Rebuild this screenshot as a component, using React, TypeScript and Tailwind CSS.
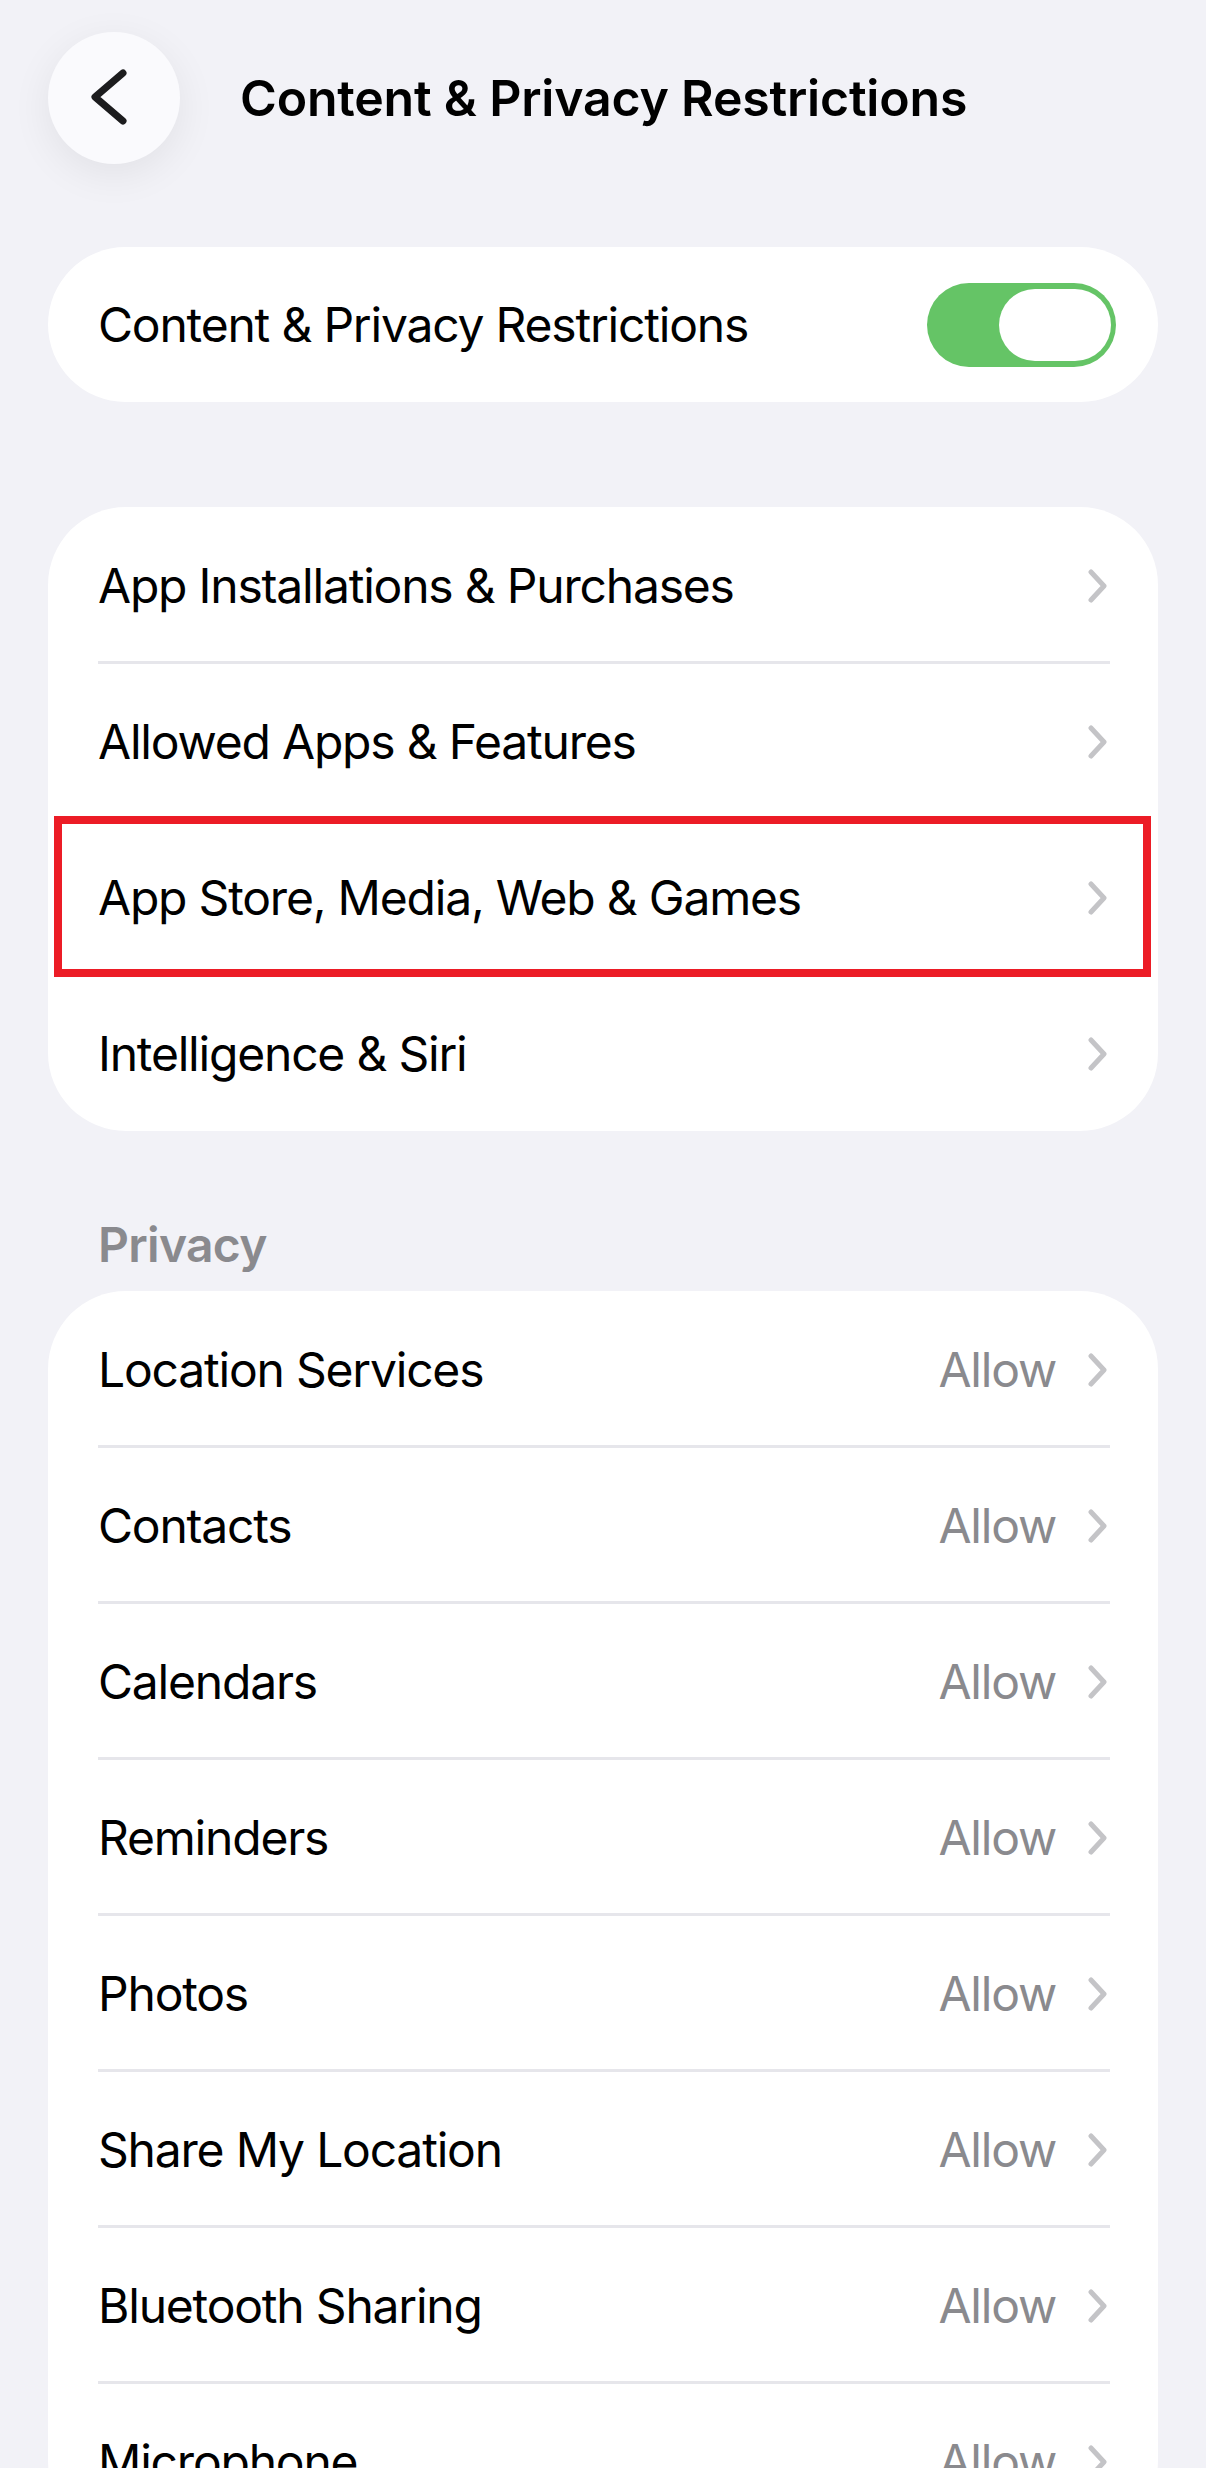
import React from "react";

const font = { fontFamily: 'Inter, "Noto Sans", sans-serif' };

function Chevron() {
  return (
    <svg width="22" height="34" viewBox="0 0 22 34" className="shrink-0">
      <path d="M4 3 L17 17 L4 31" fill="none" stroke="#c4c4c7" strokeWidth="5" strokeLinecap="round" strokeLinejoin="round" />
    </svg>
  );
}

function Row({ label, value, last, highlight }: { label: string; value?: string; last?: boolean; highlight?: boolean }) {
  return (
    <div className="relative flex h-[156px] items-center pl-[50px] pr-[49px] pt-[2px]">
      <span className="flex-1 text-[48px] tracking-[-0.025em] text-black">{label}</span>
      {value && <span className="mr-[31px] text-[48px] tracking-[-0.025em] text-[#8a8a8e]">{value}</span>}
      <Chevron />
      {!last && <div className="absolute bottom-[-1px] left-[50px] right-[48px] h-[3px] bg-[#e6e6eb]" />}
      {highlight && (
        <div className="pointer-events-none absolute left-[6px] right-[7px] top-[-3px] h-[161px] border-[8px] border-[#ec1c26]" />
      )}
    </div>
  );
}

export default function App() {
  const first = [
    "App Installations & Purchases",
    "Allowed Apps & Features",
    "App Store, Media, Web & Games",
    "Intelligence & Siri",
  ];
  const privacy = [
    "Location Services",
    "Contacts",
    "Calendars",
    "Reminders",
    "Photos",
    "Share My Location",
    "Bluetooth Sharing",
    "Microphone",
  ];
  return (
    <div className="min-h-[2468px] w-full bg-[#f2f2f7] pb-[60px]" style={font}>
      <div className="flex h-[247px] items-start pl-[48px]">
        <div className="mt-[32px] flex h-[132px] w-[132px] items-center justify-center rounded-full bg-[#fafafd] shadow-[0_10px_40px_rgba(0,0,0,0.07)]">
          <svg width="132" height="132" viewBox="0 0 132 132">
            <path d="M75 41 L47 65 L75 89" fill="none" stroke="#1c1c1e" strokeWidth="7" strokeLinecap="round" strokeLinejoin="round" />
          </svg>
        </div>
        <div className="ml-[60px] mt-[66px] text-[50px] font-semibold leading-[64px] tracking-[-0.004em] text-black">
          Content &amp; Privacy Restrictions
        </div>
      </div>

      <div className="mx-[48px] flex h-[155px] items-center rounded-[78px] bg-white pl-[50px] pr-[42px]">
        <span className="flex-1 text-[48px] tracking-[-0.025em] text-black">Content &amp; Privacy Restrictions</span>
        <div className="flex h-[84px] w-[189px] items-center justify-end rounded-full bg-[#65c466] pr-[5px]">
          <div className="h-[72px] w-[112px] rounded-full bg-white" />
        </div>
      </div>

      <div className="mx-[48px] mt-[105px] rounded-[78px] bg-white">
        {first.map((l, i) => (
          <Row key={l} label={l} last={i === first.length - 1} highlight={i === 2} />
        ))}
      </div>

      <div className="flex h-[160px] items-end pb-[17px] pl-[98px] text-[48px] font-semibold leading-[58px] tracking-[-0.015em] text-[#8a8a8e]">
        Privacy
      </div>

      <div className="mx-[48px] rounded-[78px] bg-white">
        {privacy.map((l, i) => (
          <Row key={l} label={l} value="Allow" last={i === privacy.length - 1} />
        ))}
      </div>
    </div>
  );
}
